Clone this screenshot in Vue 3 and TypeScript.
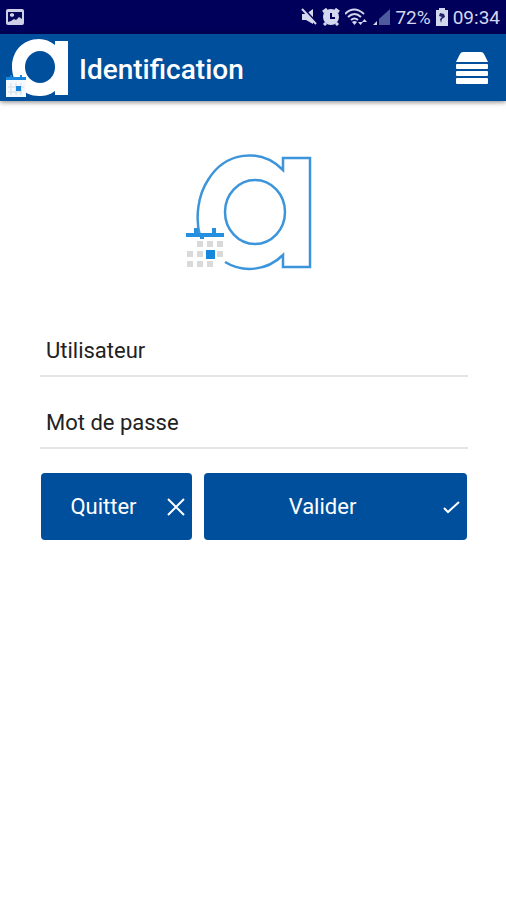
<script setup lang="ts">
import { ref } from 'vue'

const user = ref('')
const password = ref('')
const battery = ref(72)
const time = ref('09:34')

function quit(): void {
  user.value = ''
  password.value = ''
}
</script>

<template>
  <div class="screen">
    <div class="status">
      <svg width="18" height="17" viewBox="0 0 18 17" aria-hidden="true">
        <rect width="18" height="16" rx="2" fill="#cfcfe8" />
        <path d="M2 3h14v7l-3-2-3 3-2-1-3 2-3 1z" fill="#08085a" />
        <path d="M4 5l2-1 2 1v2L6 8 4 7z" fill="#cfcfe8" />
      </svg>
      <div class="indicators">
        <svg width="16" height="18" viewBox="0 0 16 18" aria-hidden="true">
          <path d="M1 6h4l7-5v15l-7-4H1z" fill="#d4d8ee" />
          <path d="M2 0l14 15" stroke="#00005a" stroke-width="2" />
          <path d="M1 1l14 15" stroke="#d4d8ee" stroke-width="2" />
        </svg>
        <svg width="18" height="18" viewBox="0 0 18 18" aria-hidden="true">
          <path d="M1 4l4-3M17 4l-4-3M4 15l-2 2M14 15l2 2" stroke="#d4d8ee" stroke-width="3" />
          <circle cx="9" cy="9" r="8" fill="#d4d8ee" />
          <path d="M9 5v5h4" fill="none" stroke="#00005a" stroke-width="2" />
        </svg>
        <svg width="22" height="18" viewBox="0 0 22 18" aria-hidden="true">
          <g fill="none" stroke="#d4d8ee" stroke-width="2">
            <path d="M0 6q9-9 19 0M3 9q6.500-6 13 0M6 12q3.500-3 7 0" />
          </g>
          <path d="M7 14q2.500-2 5 0l-2.500 3z" fill="#d4d8ee" />
          <path d="M13 14l2.500 3 2.500-3zM17 14l2.500-3 2.500 3z" fill="#d4d8ee" />
        </svg>
        <svg width="18" height="18" viewBox="0 0 18 18" aria-hidden="true">
          <path d="M18 1v16H7v-6z" fill="#4d5b9d" />
          <path d="M5 13v4H1z" fill="#d4d8ee" />
        </svg>
        <span>{{ battery }}%</span>
        <svg width="12" height="18" viewBox="0 0 12 18" aria-hidden="true">
          <path d="M3 0h6v2h3v16H0V2h3z" fill="#d4d8ee" />
          <path d="M4 5l4 1 1 3-3 2-1 4-1-4 2-2-3-1z" fill="#202468" />
        </svg>
        <span>{{ time }}</span>
      </div>
    </div>

    <header class="bar">
      <svg width="63" height="60" viewBox="0 0 63 60" aria-hidden="true">
        <path
          d="M49 7V3h13v54H49v-4C44 57 39 58 33 58 17 58 6 45 6 29S17 1 33 1c6 0 11 2 16 6z"
          fill="#fff"
        />
        <ellipse cx="34" cy="29" rx="15" ry="16" fill="#004f9c" />
        <path d="M0 40h20v19H0z" fill="#f5f8fc" />
        <path d="M0 39h20v3H0zM4 37h2v2H4zM14 37h2v2h-2z" fill="#1687dc" />
        <path d="M2 49h16M2 54h14M5 45v12M10 45v12M15 45v12" stroke="#d5dce4" />
        <path d="M10 48h5v5h-5z" fill="#1687dc" />
      </svg>
      <h1>Identification</h1>
      <button class="menu" type="button" aria-label="Menu">
        <svg width="34" height="34" viewBox="0 0 34 34" aria-hidden="true">
          <path d="M8 1h18q2 0 3 2l4 8H1l4-8q1-2 3-2z" fill="#fff" />
          <g fill="#fff">
            <rect x="1" y="13" width="32" height="5" rx="1" />
            <rect x="1" y="20" width="32" height="5" rx="1" />
            <rect x="1" y="27" width="32" height="6" rx="1" />
          </g>
        </svg>
      </button>
    </header>

    <main>
      <div class="brand">
        <svg width="126" height="120" viewBox="0 0 126 120" aria-hidden="true">
          <g fill="none" stroke="#3c95db" stroke-width="2.500">
            <path
              d="M14 84C9 66 12 43 22 28 39 0 74-5 97 18V6h27v109H97v-12C81 119 57 121 39 110"
            />
            <ellipse cx="69" cy="60" rx="30" ry="32" />
          </g>
          <path d="M0 81h38v4H0zM8 76h4v5H8zM26 76h4v5h-4zM14 83h4v4h-4z" fill="#2490df" />
          <g fill="#d9d9d9">
            <path d="M11 89h6v6h-6zM21 89h6v6h-6zM31 89h6v6h-6z" />
            <path d="M1 99h6v6H1zM11 99h6v6h-6zM31 99h6v6h-6z" />
            <path d="M1 109h6v6H1zM11 109h6v6h-6zM21 109h6v6h-6z" />
          </g>
          <path d="M20 98h9v9h-9z" fill="#1787dc" />
        </svg>
      </div>

      <form @submit.prevent>
        <input
          v-model="user"
          type="text"
          aria-label="Utilisateur"
          placeholder="Utilisateur"
          autocomplete="username"
        />
        <input
          v-model="password"
          type="password"
          aria-label="Mot de passe"
          placeholder="Mot de passe"
          autocomplete="current-password"
        />
        <div class="actions">
          <button type="button" @click="quit">
            <span>Quitter</span>
            <svg width="20" height="20" viewBox="0 0 20 20" aria-hidden="true">
              <path d="M2 2l16 16M18 2L2 18" />
            </svg>
          </button>
          <button type="submit">
            <span>Valider</span>
            <svg width="20" height="20" viewBox="0 0 20 20" aria-hidden="true">
              <path d="M3 11l4 4L18 5" />
            </svg>
          </button>
        </div>
      </form>
    </main>
  </div>
</template>

<style>
body {
  background: #fff;
}
</style>

<style scoped>
.screen {
  min-height: 100vh;
  background: #fff;
  color: #222;
  font-family: Roboto, 'Liberation Sans', sans-serif;
}

.status {
  display: flex;
  align-items: center;
  justify-content: space-between;
  height: 34px;
  padding: 0 6px;
  background: #00005a;
  color: #d4d8ee;
  font-size: 19px;
}

.indicators {
  display: flex;
  align-items: center;
  gap: 5px;
}

.bar {
  display: flex;
  align-items: center;
  height: 67px;
  padding: 0 17px 0 6px;
  background: #004f9c;
  box-shadow: 0 1px 5px rgba(0, 0, 0, 0.5);
}

h1 {
  flex: 1;
  margin: 0;
  padding: 4px 0 0 10px;
  color: #fff;
  font-size: 28px;
  font-weight: 500;
  line-height: 36px;
}

button {
  border: 0;
  color: #fff;
  font: inherit;
  cursor: pointer;
}

.menu {
  display: flex;
  padding: 0;
  background: none;
}

main {
  padding: 51px 38px 40px 40px;
}

.brand {
  display: flex;
  justify-content: center;
  padding: 0 10px 50px 0;
}

input {
  display: block;
  box-sizing: border-box;
  width: 100%;
  height: 55px;
  margin: 0 0 17px;
  padding: 3px 6px 0;
  border: 0;
  border-bottom: 2px solid #e4e4e4;
  border-radius: 0;
  outline: 0;
  background: transparent;
  color: #222;
  font: inherit;
  font-size: 22px;
}

input::placeholder {
  color: #222;
  opacity: 1;
}

.actions {
  display: grid;
  grid-template-columns: 151fr 263fr;
  gap: 12px;
  padding: 7px 1px 0;
}

.actions button {
  display: flex;
  align-items: center;
  height: 67px;
  padding: 0 6px 0 0;
  border-radius: 4px;
  background: #004f9c;
  font-size: 22px;
}

.actions span {
  flex: 1;
  text-align: center;
}

.actions svg {
  fill: none;
  stroke: #fff;
  stroke-width: 2;
}
</style>
